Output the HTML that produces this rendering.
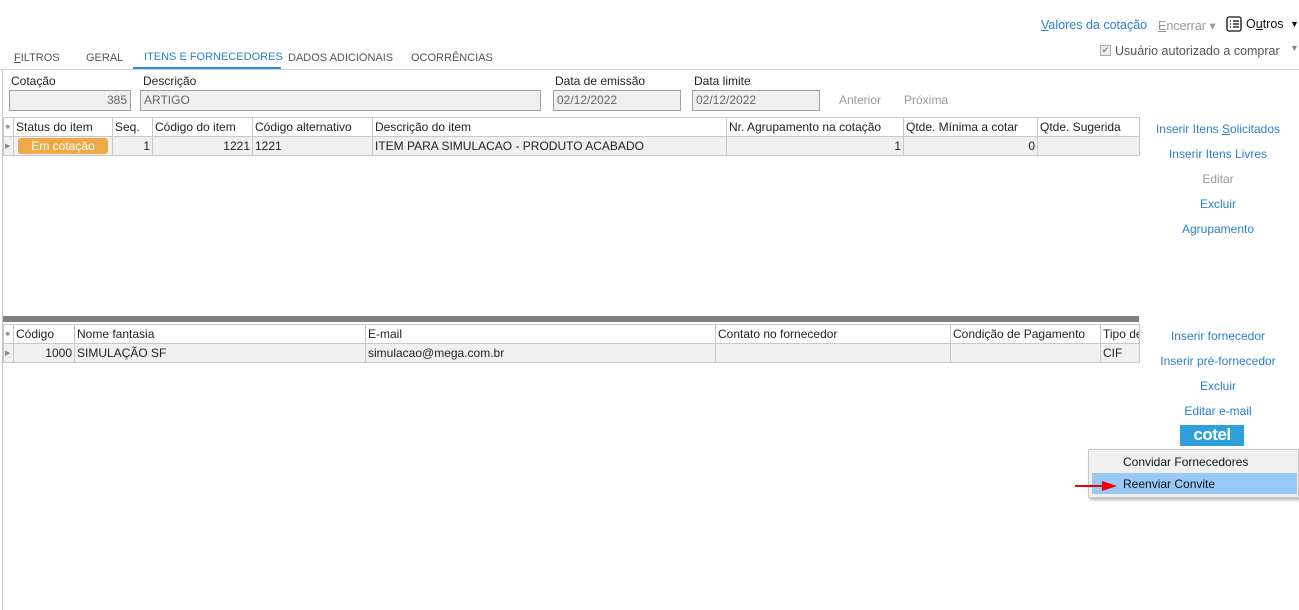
<!DOCTYPE html>
<html><head><meta charset="utf-8"><style>
*{box-sizing:border-box;margin:0;padding:0}
body{width:1299px;height:610px;background:#fff;font-family:"Liberation Sans",sans-serif;font-size:12px;color:#222;position:relative;overflow:hidden}
.a{position:absolute;white-space:nowrap}
.lnk{color:#2b7fc9}
.dis{color:#999}
.tab{font-size:11px}
.inp{position:absolute;height:21px;border:1px solid #a0a0a0;background:#efefef;color:#666;padding:3px 3px;line-height:13px}
.g{position:absolute;border-collapse:collapse;table-layout:fixed}
.g td{border:1px solid #c8c8c8;height:19px;padding:0 2px;white-space:nowrap;overflow:hidden;font-size:12px}
.g tr.h td{background:#fff;color:#222}
.g tr.r td{background:#f0f0f3}
.rt{text-align:right}
</style></head><body>
<div class="a" style="left:2px;top:69px;width:1px;height:541px;background:#c8c8c8"></div>
<div class="a" style="left:0;top:69px;width:1299px;height:1px;background:#d0d0d0"></div>

<div class="a lnk" style="left:1041px;top:18px;font-size:12.5px"><u>V</u>alores da cotação</div>
<div class="a dis" style="left:1158px;top:18px;font-size:12.5px"><u>E</u>ncerrar ▾</div>
<svg class="a" style="left:1226px;top:16px" width="16" height="16"><rect x="1" y="1" width="14" height="14" rx="2" fill="none" stroke="#111" stroke-width="1.3"/><path d="M4 5h1M4 8h1M4 11h1M7 5h6M7 8h6M7 11h6" stroke="#111" stroke-width="1.2"/></svg>
<div class="a" style="left:1246px;top:17px;font-size:12.5px;color:#111">O<u>u</u>tros</div>
<div class="a" style="left:1290px;top:19px;font-size:9px;color:#111">▼</div>
<div class="a" style="left:1100px;top:45px;width:11px;height:11px;border:1px solid #aaa;background:#eee;font-size:9px;line-height:9px;color:#888;text-align:center">✔</div>
<div class="a" style="left:1115px;top:44px;color:#555;font-size:12.5px">Usuário autorizado a comprar</div>
<div class="a" style="left:1290px;top:43px;color:#888;font-size:9px">▼</div>

<div class="a tab" style="left:14px;top:52px;color:#555"><u>F</u>ILTROS</div>
<div class="a tab" style="left:86px;top:52px;color:#555">GERAL</div>
<div class="a tab" style="left:144px;top:51px;color:#2b7fc9">ITENS E FORNECEDORES</div>
<div class="a" style="left:133px;top:67px;width:148px;height:2px;background:#2b8fe0"></div>
<div class="a tab" style="left:288px;top:52px;color:#555">DADOS ADICIONAIS</div>
<div class="a tab" style="left:411px;top:52px;color:#555">OCORRÊNCIAS</div>

<div class="a" style="left:11px;top:74px">Cotação</div>
<div class="a" style="left:143px;top:74px">Descrição</div>
<div class="a" style="left:555px;top:74px">Data de emissão</div>
<div class="a" style="left:694px;top:74px">Data limite</div>
<div class="inp" style="left:9px;top:90px;width:122px;text-align:right">385</div>
<div class="inp" style="left:140px;top:90px;width:401px">ARTIGO</div>
<div class="inp" style="left:553px;top:90px;width:128px">02/12/2022</div>
<div class="inp" style="left:692px;top:90px;width:128px">02/12/2022</div>
<div class="a dis" style="left:839px;top:93px">Anterior</div>
<div class="a dis" style="left:904px;top:93px">Próxima</div>

<table class="g" style="left:3px;top:117px;width:1136px">
<colgroup><col style="width:10px"><col style="width:99px"><col style="width:40px"><col style="width:100px"><col style="width:120px"><col style="width:354px"><col style="width:177px"><col style="width:134px"><col style="width:102px"></colgroup>
<tr class="h"><td style="font-size:9px;color:#888;padding:0">⁕</td><td>Status do item</td><td>Seq.</td><td>Código do item</td><td>Código alternativo</td><td>Descrição do item</td><td>Nr. Agrupamento na cotação</td><td>Qtde. Mínima a cotar</td><td>Qtde. Sugerida</td></tr>
<tr class="r"><td style="font-size:7px;color:#888;padding:0 1px">▶</td><td style="padding:0 4px"><div style="background:#eda848;color:#fff;border-radius:3px;text-align:center;height:16px;line-height:16px">Em cotação</div></td><td class="rt">1</td><td class="rt">1221</td><td>1221</td><td>ITEM PARA SIMULACAO - PRODUTO ACABADO</td><td class="rt">1</td><td class="rt">0</td><td></td></tr>
</table>

<div class="a" style="left:3px;top:316px;width:1136px;height:6px;background:#808080"></div>
<table class="g" style="left:3px;top:324px;width:1136px">
<colgroup><col style="width:10px"><col style="width:61px"><col style="width:291px"><col style="width:350px"><col style="width:235px"><col style="width:150px"><col style="width:39px"></colgroup>
<tr class="h"><td style="font-size:9px;color:#888;padding:0">⁕</td><td>Código</td><td>Nome fantasia</td><td>E-mail</td><td>Contato no fornecedor</td><td>Condição de Pagamento</td><td>Tipo de</td></tr>
<tr class="r"><td style="font-size:7px;color:#888;padding:0 1px">▶</td><td class="rt">1000</td><td>SIMULAÇÃO SF</td><td>simulacao@mega.com.br</td><td></td><td></td><td>CIF</td></tr>
</table>

<div class="a lnk" style="left:1138px;top:122px;width:160px;text-align:center">Inserir Itens <u>S</u>olicitados</div>
<div class="a lnk" style="left:1138px;top:147px;width:160px;text-align:center">Inserir Itens Livres</div>
<div class="a dis" style="left:1138px;top:172px;width:160px;text-align:center">Editar</div>
<div class="a lnk" style="left:1138px;top:197px;width:160px;text-align:center">Excluir</div>
<div class="a lnk" style="left:1138px;top:222px;width:160px;text-align:center">Agrupamento</div>
<div class="a lnk" style="left:1138px;top:329px;width:160px;text-align:center">Inserir fornecedor</div>
<div class="a lnk" style="left:1138px;top:354px;width:160px;text-align:center">Inserir pré-fornecedor</div>
<div class="a lnk" style="left:1138px;top:379px;width:160px;text-align:center">Excluir</div>
<div class="a lnk" style="left:1138px;top:404px;width:160px;text-align:center">Editar e-mail</div>
<div class="a" style="left:1180px;top:425px;width:64px;height:21px;background:#2fa0dc;color:#fff;font-weight:bold;font-size:17px;line-height:20px;text-align:center;letter-spacing:-0.5px">cotel</div>

<div class="a" style="left:1088px;top:449px;width:211px;height:49px;background:#f0f0f0;border:1px solid #c8c8c8;box-shadow:2px 2px 3px rgba(0,0,0,.3)"></div>
<div class="a" style="left:1092px;top:473px;width:205px;height:21px;background:#99c9f5"></div>
<div class="a" style="left:1123px;top:455px;color:#111">Convidar Fornecedores</div>
<div class="a" style="left:1123px;top:477px;color:#111">Reenviar Convite</div>
<svg class="a" style="left:1074px;top:480px" width="44" height="12"><path d="M1 6H30" stroke="#e00" stroke-width="2"/><path d="M28 1L43 6L28 11Z" fill="#e00"/></svg>
</body></html>
